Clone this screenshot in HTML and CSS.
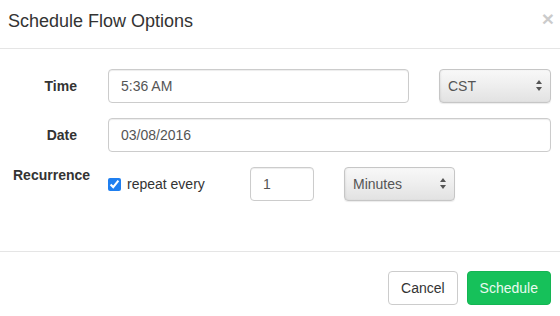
FILE: index.html
```html
<!DOCTYPE html>
<html lang="en">
<head>
    <meta charset="UTF-8">
    <meta name="viewport" content="width=device-width, initial-scale=1.0">
    <title>Schedule Flow Options</title>
    <link rel="stylesheet" href="styles.css">
</head>
<body>
    <div class="modal">
        <div class="modal-header">
            <h4 class="modal-title">Schedule Flow Options</h4>
            <button type="button" class="close">&times;</button>
        </div>
        <form class="modal-body">
            <div class="form-row">
                <label class="row-label" for="time">Time</label>
                <input type="text" id="time" class="field time-field" value="5:36 AM">
                <div class="select-wrap zone">
                    <select id="zone" class="select">
                        <option>CST</option>
                        <option>EST</option>
                        <option>PST</option>
                    </select>
                    <svg class="arrows" width="6" height="11" viewBox="0 0 6 11"><path d="M3 0L6 4H0z M3 11L6 7H0z" fill="#555"/></svg>
                </div>
            </div>
            <div class="form-row">
                <label class="row-label" for="date">Date</label>
                <input type="text" id="date" class="field date-field" value="03/08/2016">
            </div>
            <div class="form-row">
                <label class="row-label top" for="every">Recurrence</label>
                <label class="check">
                    <input type="checkbox" checked>
                    <span>repeat every</span>
                </label>
                <input type="text" id="every" class="field every-field" value="1">
                <div class="select-wrap unit">
                    <select class="select">
                        <option>Minutes</option>
                        <option>Hours</option>
                        <option>Days</option>
                    </select>
                    <svg class="arrows" width="6" height="11" viewBox="0 0 6 11"><path d="M3 0L6 4H0z M3 11L6 7H0z" fill="#555"/></svg>
                </div>
            </div>
        </form>
        <div class="modal-footer">
            <button type="button" class="btn btn-default">Cancel</button>
            <button type="button" class="btn btn-success">Schedule</button>
        </div>
    </div>
</body>
</html>
```

FILE: styles.css
```css
body { margin: 0; font-family: "Liberation Sans", Helvetica, Arial, sans-serif; font-size: 14px; line-height: 20px; color: #333; background: #fff; }
.modal { width: 560px; }

.modal-header { height: 49px; box-sizing: border-box; padding: 11px 6px 0 8px; border-bottom: 1px solid #e5e5e5; display: flex; justify-content: space-between; align-items: flex-start; }
.modal-title { margin: 0; font-size: 18px; font-weight: normal; line-height: 20px; }
.close { border: none; background: none; padding: 0; margin-top: -3px; font-family: "Liberation Sans", Arial, sans-serif; font-size: 21px; font-weight: bold; line-height: 21px; color: #000; opacity: .2; cursor: pointer; }

.modal-body { padding: 20px 9px 50px 0; }
.form-row { display: flex; align-items: center; height: 34px; margin-bottom: 15px; }
.form-row:last-child { margin-bottom: 0; }
.row-label { width: 77px; margin-right: 31px; text-align: right; font-weight: bold; white-space: nowrap; }
.row-label.top { align-self: flex-start; text-align: left; box-sizing: border-box; padding-left: 13px; margin-top: -2px; }

.field { box-sizing: border-box; height: 34px; padding: 6px 12px; border: 1px solid #ccc; border-radius: 4px; font-family: inherit; font-size: 14px; color: #555; box-shadow: inset 0 1px 1px rgba(0,0,0,.075); outline: none; }
.time-field { width: 301px; margin-right: 30px; }
.date-field { width: 443px; }
.every-field { width: 64px; margin-right: 30px; }

.check { display: flex; align-items: center; width: 142px; font-weight: normal; color: #333; }
.check input { width: 13px; height: 13px; margin: 0 6px 0 0; accent-color: #1f7ff0; }

.select-wrap { position: relative; }
.zone { width: 112px; }
.unit { width: 111px; }
.select { -webkit-appearance: none; appearance: none; width: 100%; box-sizing: border-box; height: 34px; padding: 0 8px; border: 1px solid #c6c6c6; border-radius: 4px; font-family: inherit; font-size: 14px; color: #555; background: linear-gradient(to bottom, #f8f8f8 0%, #efefef 45%, #e2e2e2 100%); box-shadow: inset 1px 0 2px rgba(0,0,0,.06), 0 1px 1px rgba(0,0,0,.08); }
.arrows { position: absolute; right: 9px; top: 11px; pointer-events: none; }

.modal-footer { border-top: 1px solid #e5e5e5; padding: 19px 9px 0; display: flex; justify-content: flex-end; gap: 9px; }
.btn { box-sizing: border-box; height: 34px; padding: 6px 12px; border: 1px solid #ccc; border-radius: 4px; font-family: inherit; font-size: 14px; line-height: 20px; cursor: pointer; }
.btn-default { background: #fff; color: #333; }
.btn-success { background: #16c15a; border-color: #14b553; color: #eafaf0; }
```
